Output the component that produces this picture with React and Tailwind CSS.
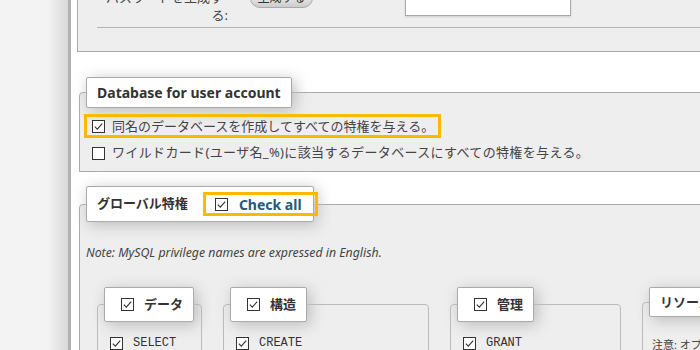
const FONT = "font-['Noto_Sans','Noto_Sans_CJK_JP',sans-serif]";

function Box({ checked = true }) {
  return (
    <svg width="13" height="13" viewBox="0 0 13 13" className="shrink-0">
      <rect x="0.5" y="0.5" width="12" height="12" fill="#fff" stroke="#333" />
      {checked && <path d="M2.8 6.6 5.3 9.2 10.2 3.6" fill="none" stroke="#333" strokeWidth="1.1" />}
    </svg>
  );
}

function Legend({ children, className = '' }) {
  return (
    <legend className={`bg-white border border-[#aaa] rounded-[2px] shadow-[3px_3px_15px_#bbb] px-[10px] py-[5px] font-bold text-[#333] ${className}`}>
      {children}
    </legend>
  );
}

const GROUPS = [
  { title: 'データ', width: 'w-[105px]', items: ['SELECT', 'INSERT', 'UPDATE', 'DELETE', 'FILE'] },
  { title: '構造', width: 'w-[206px]', items: ['CREATE', 'ALTER', 'INDEX', 'DROP'] },
  { title: '管理', width: 'w-[171px]', items: ['GRANT', 'SUPER', 'PROCESS', 'RELOAD'] },
];

export default function App() {
  return (
    <div className={`flex h-[350px] w-[700px] overflow-hidden bg-white text-[13px] text-[#444] ${FONT}`}>
      <div className="w-[68px] shrink-0 bg-[linear-gradient(to_right,#f3f3f3_70%,#d8d8d8)]" />
      <div className="w-[3px] shrink-0 bg-[#b1b1b1]" />

      <main className="min-w-0 flex-1 overflow-hidden">
        {/* password generation block, scrolled mostly out of view */}
        <div className="ml-[6px] h-[52px] w-[700px] overflow-hidden border-b border-l border-[#aaa] bg-[#eee]">
          <div className="-mt-[12px] ml-[19px] flex h-[40px] w-[660px] items-start border-b border-[#b3b3b3]">
            <div className="w-[131px] text-right leading-[18px]">
              <span className="pr-[5px]">パスワードを生成す</span>
              <br />
              る:
            </div>
            <button className="ml-[22px] h-[20px] w-[63px] rounded-[10px] border border-[#aaa] bg-[linear-gradient(#fff,#ccc)] text-[12px] leading-[18px] text-[#333]">
              生成する
            </button>
            <div className="ml-[92px] h-[28px] w-[166px] border border-[#aaa] bg-white shadow-[0_1px_2px_#ccc]" />
          </div>
        </div>

        <fieldset className="ml-[8px] mt-[25px] w-[640px] rounded-tl-[4px] border border-[#aaa] bg-[#eee] px-[6px] pb-[6px] pt-[6px]">
          <Legend className="text-[14px] leading-[19px]">Database for user account</Legend>
          <div className="-ml-[2px] inline-flex h-[24px] items-center border-[3px] border-[#fcb900] pl-[5px] pr-[4px]">
            <Box />
            <span className="ml-[7px] leading-[18px]">同名のデータベースを作成してすべての特権を与える。</span>
          </div>
          <div className="mt-[3px] flex h-[24px] items-center pl-[6px]">
            <Box checked={false} />
            <span className="ml-[7px] tracking-[0.35px]">ワイルドカード(ユーザ名_%)に該当するデータベースにすべての特権を与える。</span>
          </div>
        </fieldset>

        <fieldset className="ml-[8px] mt-[14px] w-[640px] rounded-tl-[4px] border border-[#aaa] bg-[#eee] px-[6px]">
          <Legend className="flex items-center text-[13px]">
            <span>グローバル特権</span>
            <span className="-mr-[15px] ml-[15px] flex h-[24px] items-center border-[3px] border-[#fcb900] pl-[9px] pr-[13px]">
              <Box />
              <span className="ml-[11px] text-[14px] text-[#235a81]">Check all</span>
            </span>
          </Legend>

          <p className="mt-[24px] text-[12.3px] italic leading-[14px] text-[#444]">
            Note: MySQL privilege names are expressed in English.
          </p>

          <div className="ml-[11px] mt-[27px] flex items-start gap-[21px]">
            {GROUPS.map((g) => (
              <fieldset key={g.title} className={`${g.width} h-[140px] shrink-0 rounded-t-[4px] border border-[#bbb] bg-[#eee] px-[6px]`}>
                <legend className="flex h-[35px] items-center rounded-[2px] border border-[#aaa] bg-white pl-[16px] pr-[10px] font-bold text-[#333] shadow-[3px_3px_15px_#bbb]">
                  <Box />
                  <span className="ml-[10px]">{g.title}</span>
                </legend>
                <div className="pt-[9px]">
                  {g.items.map((it) => (
                    <div key={it} className="flex h-[24px] items-center pl-[6px]">
                      <Box />
                      <span className="ml-[10px] font-['Liberation_Mono',monospace] text-[12px] text-[#333]">{it}</span>
                    </div>
                  ))}
                </div>
              </fieldset>
            ))}
            <fieldset className="h-[140px] w-[220px] shrink-0 rounded-t-[4px] border border-[#bbb] bg-[#eee] px-[6px]">
              <Legend className="h-[30px] leading-[18px]">リソース制限</Legend>
              <p className="pl-[3px] pt-[20px] text-[11px] text-[#444]">注意: オプションを 0 (ゼロ) に設定すると制限を解除します。</p>
            </fieldset>
          </div>
        </fieldset>
      </main>
    </div>
  );
}
